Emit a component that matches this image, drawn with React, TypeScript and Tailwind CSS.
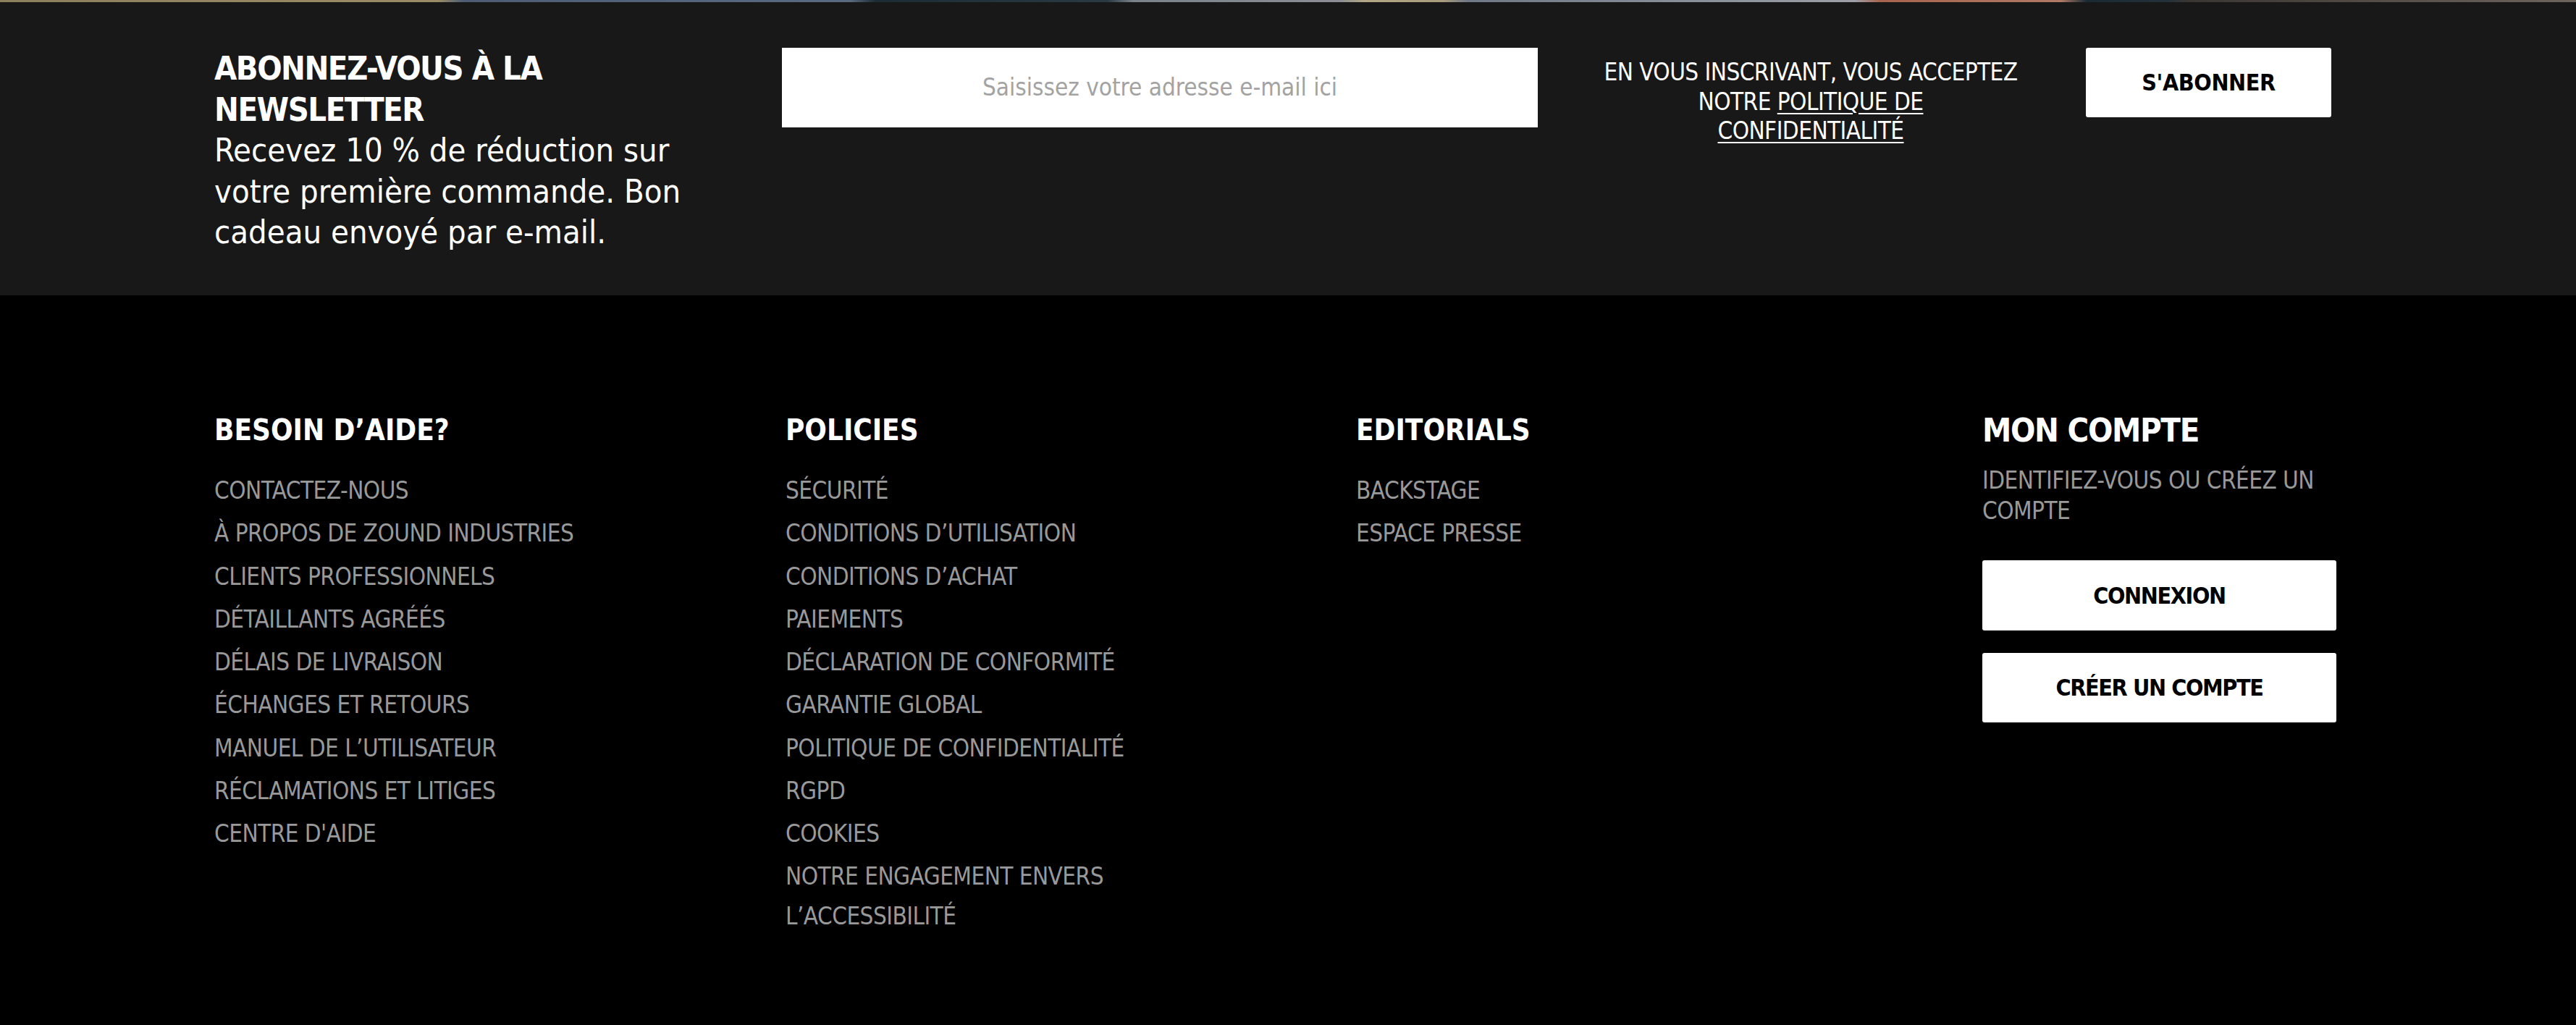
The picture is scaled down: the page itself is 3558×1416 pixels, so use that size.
import React from "react";

const NARROW = "font-['DejaVu_Sans_Condensed','Liberation_Sans',sans-serif]";

const help = [
  "CONTACTEZ-NOUS",
  "À PROPOS DE ZOUND INDUSTRIES",
  "CLIENTS PROFESSIONNELS",
  "DÉTAILLANTS AGRÉÉS",
  "DÉLAIS DE LIVRAISON",
  "ÉCHANGES ET RETOURS",
  "MANUEL DE L’UTILISATEUR",
  "RÉCLAMATIONS ET LITIGES",
  "CENTRE D'AIDE",
];

const policies: React.ReactNode[] = [
  "SÉCURITÉ",
  "CONDITIONS D’UTILISATION",
  "CONDITIONS D’ACHAT",
  "PAIEMENTS",
  "DÉCLARATION DE CONFORMITÉ",
  "GARANTIE GLOBAL",
  "POLITIQUE DE CONFIDENTIALITÉ",
  "RGPD",
  "COOKIES",
  (
    <>
      NOTRE ENGAGEMENT ENVERS
      <br />
      L’ACCESSIBILITÉ
    </>
  ),
];

const editorials = ["BACKSTAGE", "ESPACE PRESSE"];

function LinkColumn({ title, items, width }: { title: string; items: React.ReactNode[]; width: string }) {
  return (
    <div className={`${width} shrink-0 flex flex-col`}>
      <h3 className={`${NARROW} text-[40px] leading-[52px] font-bold text-white mb-[30px] whitespace-nowrap`}>{title}</h3>
      <ul className="flex flex-col gap-[4.25px]">
        {items.map((it, i) => (
          <li key={i} className={`${NARROW} text-[33px] leading-[55px] tracking-[-0.55px] text-[#999999] whitespace-nowrap`}>
            {it}
          </li>
        ))}
      </ul>
    </div>
  );
}

export default function App() {
  return (
    <div className="w-full min-h-[1416px] bg-black">
      {/* photo strip remnant */}
      <div className="h-[3px] w-full bg-[linear-gradient(90deg,#8c7f5c_0%,#9a8c66_17%,#4d5c72_18%,#5a6a80_33%,#1c2c34_34%,#2a3a44_43%,#7c828a_44%,#8a8e94_52%,#b2a684_53%,#a89c7c_56%,#6f7886_57%,#9ca0a6_72%,#a8644e_73%,#b07a66_80%,#1a2a34_81%,#22303a_84%,#3a3632_85%,#6e645e_100%)]" />
      {/* newsletter */}
      <section className="bg-[#181818] h-[405px]">
        <div className="flex items-start pt-[63px] pl-[296px]">
          <div className="w-[784px] shrink-0 text-white">
            <h2 className={`${NARROW} font-bold text-[45px] leading-[57px] tracking-[-1.5px] whitespace-nowrap`}>
              ABONNEZ-VOUS À LA
              <br />
              NEWSLETTER
            </h2>
            <p className={`${NARROW} text-[45px] leading-[56.5px] whitespace-nowrap`}>
              Recevez 10 % de réduction sur
              <br />
              votre première commande. Bon
              <br />
              cadeau envoyé par e-mail.
            </p>
          </div>
          <div className="w-[1044px] h-[110px] shrink-0 bg-white flex items-center justify-center">
            <span className={`${NARROW} text-[33px] text-[#a3a3a3]`}>Saisissez votre adresse e-mail ici</span>
          </div>
          <div className={`${NARROW} w-[664px] ml-[45px] shrink-0 mt-[14px] text-center text-white text-[33px] tracking-[-0.55px] leading-[40.5px] whitespace-nowrap`}>
            EN VOUS INSCRIVANT, VOUS ACCEPTEZ
            <br />
            NOTRE{" "}
            <span className="underline decoration-[2px] underline-offset-[4px]">
              POLITIQUE DE
              <br />
              CONFIDENTIALITÉ
            </span>
          </div>
          <button className={`${NARROW} ml-[48px] w-[339px] h-[96px] shrink-0 bg-white rounded-[3px] text-black font-bold text-[32px] tracking-[-0.4px]`}>
            S'ABONNER
          </button>
        </div>
      </section>
      {/* footer */}
      <footer className="bg-black pt-[160px] pb-[120px]">
        <div className="flex items-start pl-[296px]">
          <LinkColumn title="BESOIN D’AIDE?" items={help} width="w-[789px]" />
          <LinkColumn title="POLICIES" items={policies} width="w-[788px]" />
          <LinkColumn title="EDITORIALS" items={editorials} width="w-[865px]" />
          <div className="w-[489px] shrink-0 mt-[-3px] flex flex-col">
            <h3 className={`${NARROW} text-[45px] leading-[60px] font-bold text-white tracking-[-1.3px] whitespace-nowrap`}>MON COMPTE</h3>
            <p className={`${NARROW} mt-[18px] text-[33px] leading-[42px] tracking-[-0.55px] text-[#999999] whitespace-nowrap`}>
              IDENTIFIEZ-VOUS OU CRÉEZ UN
              <br />
              COMPTE
            </p>
            <button className={`${NARROW} mt-[47px] h-[97px] w-full bg-white rounded-[3px] text-black font-bold text-[32px] tracking-[-1.4px]`}>
              CONNEXION
            </button>
            <button className={`${NARROW} mt-[31px] h-[96px] w-full bg-white rounded-[3px] text-black font-bold text-[32px] tracking-[-1.4px]`}>
              CRÉER UN COMPTE
            </button>
          </div>
        </div>
      </footer>
    </div>
  );
}
